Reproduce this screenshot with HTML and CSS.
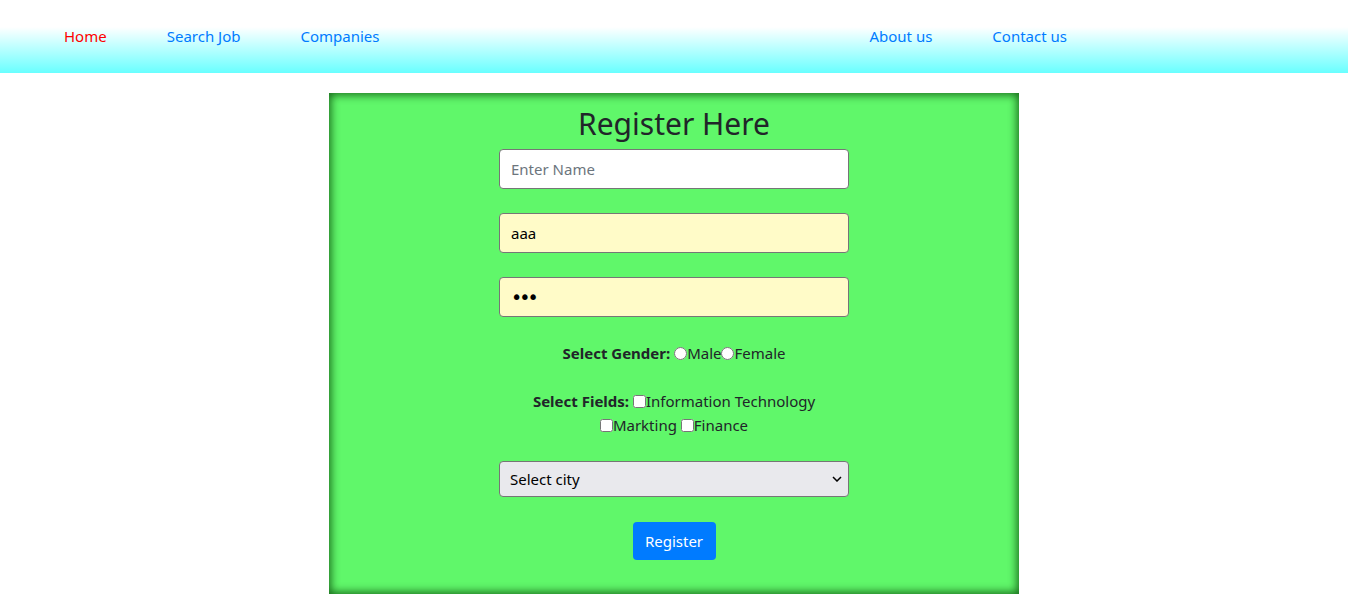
FILE: index.html
```html
<!DOCTYPE html>
<html>
<head>
<meta charset="utf-8">
<link rel="stylesheet" href="styles.css">
</head>
<body>
<header class="topbar">
  <nav class="nav">
    <ul class="nav-group">
      <li><a class="nav-link active" href="#">Home</a></li>
      <li><a class="nav-link" href="#">Search Job</a></li>
      <li><a class="nav-link" href="#">Companies</a></li>
    </ul>
    <ul class="nav-group nav-right">
      <li><a class="nav-link" href="#">About us</a></li>
      <li><a class="nav-link" href="#">Contact us</a></li>
    </ul>
  </nav>
</header>
<main class="main">
  <form class="panel">
    <h2 class="title">Register Here</h2>
    <input class="field" type="text" placeholder="Enter Name">
    <input class="field filled" type="text" value="aaa">
    <input class="field filled pass" type="password" value="aaa">
    <div class="row"><b>Select Gender:</b> <input type="radio" name="g" class="radio">Male<input type="radio" name="g" class="radio">Female</div>
    <div class="row fields"><b>Select Fields:</b> <input type="checkbox" class="check">Information Technology<br><input type="checkbox" class="check">Markting <input type="checkbox" class="check">Finance</div>
    <select class="field select">
      <option>Select city</option>
    </select>
    <button type="button" class="btn">Register</button>
  </form>
</main>
</body>
</html>
```
FILE: styles.css
```css
* { box-sizing: border-box; }
html, body { margin: 0; padding: 0; }
body {
  font-family: "Segoe UI", "Noto Sans", sans-serif;
  font-size: 15px;
  line-height: 24px;
  color: #212529;
  background: #fff;
}
.topbar {
  height: 73px;
  background: linear-gradient(to bottom, #ffffff 0%, #ffffff 37%, #69ffff 100%);
}
.nav {
  display: flex;
  align-items: center;
  height: 72px;
}
.nav-group {
  list-style: none;
  margin: 0;
  padding: 0 0 0 64px;
  display: flex;
  gap: 60px;
}
.nav-right {
  margin-left: auto;
  padding: 0 281px 0 0;
}
.nav-link {
  color: #007bff;
  text-decoration: none;
}
.nav-link.active { color: #ff0000; }
.main {
  padding-top: 20px;
  display: flex;
  justify-content: center;
}
.panel {
  width: 690px;
  height: 501px;
  background: #60f76a;
  box-shadow: inset 0 0 8px 2px rgba(0, 60, 0, 0.75);
  display: flex;
  flex-direction: column;
  align-items: center;
  padding-top: 12px;
  text-align: center;
}
.title {
  margin: 0 0 6px;
  font-size: 30px;
  font-weight: 400;
  line-height: 38px;
}
.field {
  width: 350px;
  height: 40px;
  border: 1px solid #767676;
  border-radius: 4px;
  padding: 0 11px;
  font: inherit;
  color: #000;
  background: #fff;
  margin-bottom: 24px;
}
.field::placeholder { color: #6c757d; }
.filled { background: #fffbc8; }
.pass {
  font-family: "DejaVu Sans", sans-serif;
  font-size: 19px;
  letter-spacing: -3px;
}
.row { margin-bottom: 24px; }
.radio { margin: 0; width: 13px; height: 13px; vertical-align: -1px; }
.check { margin: 0; width: 13px; height: 13px; vertical-align: -1px; }
.select {
  height: 36px;
  background-color: #e9e9ed;
  -webkit-appearance: none;
  appearance: none;
  padding-left: 10px;
  margin-bottom: 25px;
  background-image: url("data:image/svg+xml;utf8,<svg xmlns='http://www.w3.org/2000/svg' width='10' height='6' viewBox='0 0 10 6'><path d='M1 1l4 4 4-4' fill='none' stroke='%23000' stroke-width='1.5'/></svg>");
  background-repeat: no-repeat;
  background-position: right 6px center;
}
.btn {
  height: 38px;
  width: 83px;
  border: 0;
  border-radius: 4px;
  background: #007bff;
  color: #fff;
  font: inherit;
  padding: 0;
}
```
